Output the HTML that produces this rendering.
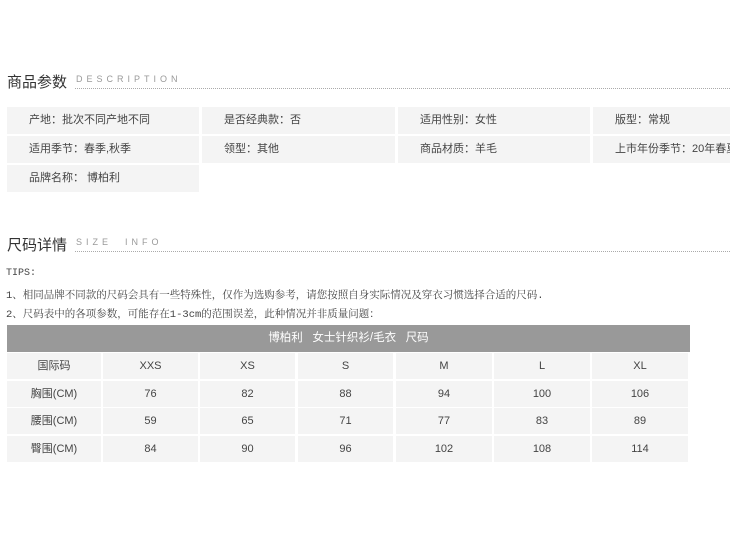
<!DOCTYPE html>
<html><head><meta charset="utf-8"><style>
body{margin:0;width:730px;height:540px;background:#fff;position:relative;overflow:hidden;font-family:"Liberation Sans","Noto Sans CJK SC",sans-serif;}
.a{position:absolute;}
.t{font-size:15px;color:#333;}
.en{font-size:9px;letter-spacing:4px;color:#999;}
.dot{border-bottom:1px dotted #aaa;height:0;}
.c{background:#f4f4f4;font-size:11px;color:#444;line-height:27px;}
.p{padding-left:22px;box-sizing:border-box;}
.s{background:#f4f4f4;font-size:11px;color:#444;text-align:center;line-height:26px;}
.tip{font-size:10px;color:#444;font-family:"Liberation Mono","Noto Serif CJK SC",monospace;}
</style></head><body>
<div class="a t" style="left:7px;top:71px;">商品参数</div>
<div class="a en" style="left:76px;top:74px;">DESCRIPTION</div>
<div class="a dot" style="left:75px;top:88px;width:655px;"></div>

<div class="a c p" style="left:7px;top:107px;width:192px;height:27px;">产地：批次不同产地不同</div>
<div class="a c p" style="left:202px;top:107px;width:193px;height:27px;">是否经典款：否</div>
<div class="a c p" style="left:398px;top:107px;width:192px;height:27px;">适用性别：女性</div>
<div class="a c p" style="left:593px;top:107px;width:137px;height:27px;">版型：常规</div>
<div class="a c p" style="left:7px;top:136px;width:192px;height:27px;">适用季节：春季,秋季</div>
<div class="a c p" style="left:202px;top:136px;width:193px;height:27px;">领型：其他</div>
<div class="a c p" style="left:398px;top:136px;width:192px;height:27px;">商品材质：羊毛</div>
<div class="a c p" style="left:593px;top:136px;width:137px;height:27px;white-space:nowrap;overflow:hidden;">上市年份季节：20年春夏</div>
<div class="a c p" style="left:7px;top:165px;width:192px;height:27px;">品牌名称： 博柏利</div>

<div class="a t" style="left:7px;top:234px;">尺码详情</div>
<div class="a en" style="left:76px;top:237px;">SIZE&nbsp;&nbsp;INFO</div>
<div class="a dot" style="left:75px;top:251px;width:655px;"></div>

<div class="a tip" style="left:6px;top:268px;">TIPS:</div>
<div class="a tip" style="left:6px;top:287px;font-size:10.5px;">1、相同品牌不同款的尺码会具有一些特殊性，仅作为选购参考，请您按照自身实际情况及穿衣习惯选择合适的尺码.</div>
<div class="a tip" style="left:6px;top:306px;font-size:10.5px;">2、尺码表中的各项参数，可能存在1-3cm的范围误差，此种情况并非质量问题：</div>

<div class="a" style="left:7px;top:325px;width:683px;height:27px;background:#999;color:#fff;font-size:11.5px;line-height:27px;text-align:center;">博柏利&nbsp;&nbsp;&nbsp;女士针织衫/毛衣&nbsp;&nbsp;&nbsp;尺码</div>
<div id="g"></div>
<script>
var cols=[[7,94],[103,95],[200,95],[298,95],[396,96],[494,96],[592,96]];
var rows=[[353,"国际码","XXS","XS","S","M","L","XL"],[381,"胸围(CM)","76","82","88","94","100","106"],[408,"腰围(CM)","59","65","71","77","83","89"],[436,"臀围(CM)","84","90","96","102","108","114"]];
var h="";
rows.forEach(function(r){for(var i=0;i<7;i++){h+='<div class="a s" style="left:'+cols[i][0]+'px;top:'+r[0]+'px;width:'+cols[i][1]+'px;height:26px;">'+r[i+1]+'</div>';}});
document.getElementById('g').innerHTML=h;
</script>
</body></html>
